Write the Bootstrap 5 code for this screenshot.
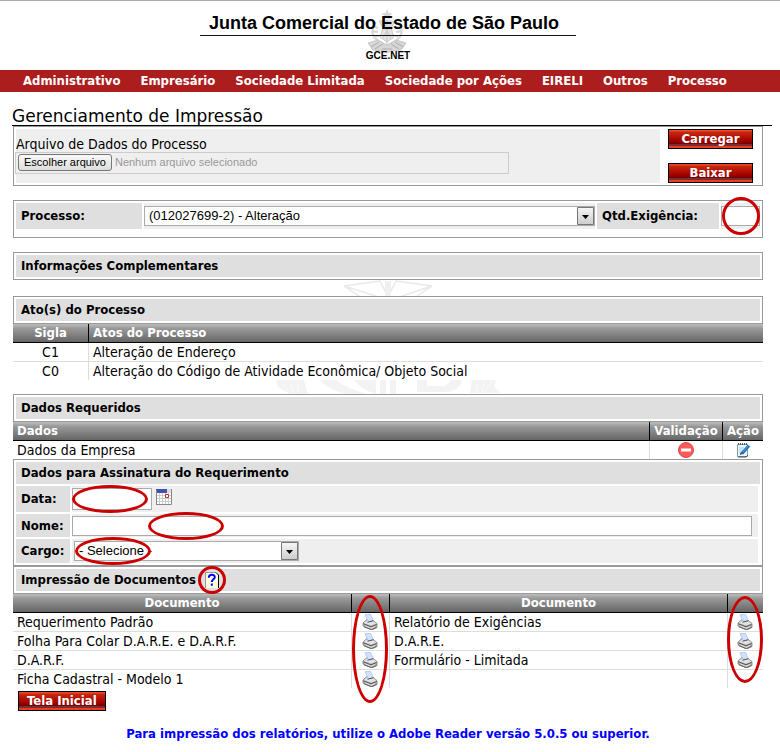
<!DOCTYPE html>
<html lang="pt-BR">
<head>
<meta charset="utf-8">
<meta name="viewport" content="width=device-width, initial-scale=1">
<title>Junta Comercial do Estado de São Paulo - GCE.NET</title>
<link href="https://cdn.jsdelivr.net/npm/bootstrap@5.3.0/dist/css/bootstrap.min.css" rel="stylesheet">
<style>
  body { font-family: "DejaVu Sans Condensed", "DejaVu Sans", Verdana, sans-serif; font-size: 14px; line-height: 18px; color: #000; background: #fff; }
  .fw-bold, th, .main-nav a, .label-cell, .btn-red, .foot-note { font-size: 13px; font-weight: 700; }
  .brand-head { height: 70px; border-top: 1px solid #aaa; padding: 0 12px 0 8px; }
  .brand-title { font: 700 18px/24px "Liberation Sans", Arial, sans-serif; border-bottom: 1px solid #111; padding: 10px 16px 0 8px; width: 376px; text-align: center; white-space: nowrap; }
  .brand-sub { font: 700 10px/14px "Liberation Sans", Arial, sans-serif; padding-top: 13px; }
  .crest { top: 8px; left: 50%; margin-left: -23px; opacity: .8; }
  .main-nav { background: #ac1d1d; padding: 0 23px; gap: 20px; height: 22px; white-space: nowrap; }
  .main-nav a { color: #fff; text-decoration: none; line-height: 22px; }
  .page { padding: 0 17px 0 13px; }
  .page-title { font-family: "DejaVu Sans", sans-serif; font-size: 17px; line-height: 18px; margin: 15px -9px 0 -1px; border-bottom: 1px solid #000; font-weight: 400; }
  .panel { border: 1px solid #999; padding: 2px; background: #fff; }
  .panel-head { background: #dfdfdf; line-height: 22px; height: 22px; padding: 0 5px; margin: 0; font-size: 13px; }
  .soft { background: #efefef; }
  .label-cell { background: #dfdfdf; padding: 0 5px; }
  .cells { display: flex; gap: 2px; }
  .gap-strip { height: 14px; overflow: hidden; display: flex; justify-content: center; }
  .gap-tall { height: 16px; }
  .btn-red { border: 1px solid #000; border-radius: 0; color: #fff; line-height: 18px; padding: 0 8px; height: 20px;
    background: linear-gradient(#f04830 0 1px, #c62a0a 2px, #a30000 60%, #700 76%, #743030 77%, #743030 87%, #ef3b24 88%); }
  .btn-red:hover { color: #fff; }
  .side-buttons { width: 100px; padding: 0 7px 0 8px; gap: 14px; }
  .file-area { padding-top: 7px; min-height: 54px; }
  .file-area > label { line-height: 16px; }
  .file-box { border: 1px solid #ccc; height: 22px; width: 494px; max-width: 100%; margin-left: -1px; padding: 1px 0 0 2px; gap: 3px; font-family: "Liberation Sans", Arial, sans-serif; font-size: 11px; line-height: 16px; }
  .file-btn { border: 1px solid #777; border-radius: 3px; background: linear-gradient(#fafafa, #ddd); padding: 0 5px; height: 17px; line-height: 15px; cursor: pointer; }
  .file-none { font-family: "Liberation Sans", Arial, sans-serif; color: #999; }
  .old-input { border: 1px solid #aaa; background: #fff; border-radius: 0; outline: 0; padding: 0 4px; font: 12px/18px "Liberation Sans", Arial, sans-serif; min-width: 0; }
  .old-select { border: 1px solid #aaa; border-radius: 0; appearance: none; padding: 0 20px 0 4px; height: 20px; font: 13px/18px "Liberation Sans", Arial, sans-serif; color: #000;
    background: #fff url("data:image/svg+xml,%3Csvg xmlns='http://www.w3.org/2000/svg' width='17' height='18'%3E%3ClinearGradient id='g' x2='0' y2='1'%3E%3Cstop stop-color='%23f6f6f6'/%3E%3Cstop offset='1' stop-color='%23ccc'/%3E%3C/linearGradient%3E%3Cpath d='M.5.5h16v17H.5z' fill='url(%23g)' stroke='%23777'/%3E%3Cpath d='M5 8h7l-3.500 4z'/%3E%3C/svg%3E") no-repeat right 0 top 0; }
  .data-input { width: 80px; height: 22px; }
  .cargo-select { width: 225px; margin-left: 2px; }
  .nome-cell { padding-right: 6px; }
  .grid-table { width: 100%; table-layout: fixed; border-collapse: separate; border-spacing: 0; margin: 0; }
  .grid-table th { background: linear-gradient(#bdbdbd 0, #999 25%, #666 100%); color: #fff; border-bottom: 1px solid #000; line-height: 18px; padding: 0 4px; }
  .grid-table td { line-height: 18px; height: 19px; padding: 0 4px; border-bottom: 1px solid #ddd; white-space: nowrap; }
  .grid-table tr:last-child td { height: 18px; border-bottom: 0; }
  .grid-table th + th { border-left: 1px solid #000; }
  .grid-table td + td { border-left: 1px solid #ddd; }
  .grid-table td.act, .grid-table th.act { padding: 0 1px 0 0; }
  .col-sigla { width: 75px; } .col-val { width: 73px; } .col-acao { width: 41px; }
  .col-print { width: 38px; } .col-print-end { width: 36px; } .col-doc { width: 338px; }
  .icon-btn { border: 0; background: none; padding: 0; display: block; width: 16px; height: 16px; margin: 0 auto; }
  .icon-btn svg { display: block; }
  .ring { position: absolute; border: 3px solid #c00; border-radius: 50%; pointer-events: none; z-index: 2; }
  .ring-wide { width: 76px; height: 28px; }
  .ring-qtd { width: 38px; height: 38px; left: 1px; top: -6px; }
  .ring-data { left: 0; top: -1px; } .ring-nome { left: 76px; top: -2px; } .ring-cargo { left: 3px; top: -2px; }
  .ring-help { width: 28px; height: 28px; left: -6px; top: -6px; }
  .ring-print { width: 36px; left: 0; top: 1px; height: 108px; }
  .ring-print.short { height: 87px; top: 2px; left: -1px; }
  .w-label { width: 126px; } .w-qlabel { width: 122px; } .w-q { width: 39px; } .w-sign { width: 54px; }
  .row-data { height: 26px; } .row-nome { height: 23px; } .row-cargo { height: 24px; }
  .sign-rows { gap: 2px; padding: 2px 2px 0 0; }
  .home-btn { margin: 3px 0 0 5px; }
  .foot-note { color: #00f; margin: 14px 0 0; }
</style>
</head>
<body>
<svg width="0" height="0" class="position-absolute" aria-hidden="true">
  <symbol id="printer" viewBox="0 0 16 16">
    <path d="M1 9l4-3.500 6 1 4 3v4L9.500 16 1 12z" fill="#b8b8b8" stroke="#777" stroke-width=".8"/>
    <path d="M1.500 9l4-3 5.500 1 3.500 2.500-5.500 2z" fill="#e2e2e2"/>
    <path d="M3 .8L8.500.3l2.800 6.200-5 1.300z" fill="#d2e3ff" stroke="#9dbdf0" stroke-width=".7"/>
    <path d="M5.500 8.200l6-1.500" stroke="#555"/>
    <path d="M1.500 9.800l7.500 3 5.500-2.300" fill="none" stroke="#555"/>
    <path d="M3.500 12l5.500 2.300 4-1.700" fill="none" stroke="#eee" stroke-width=".8"/>
    <path d="M2 12.800L9.500 15.600l5-2.300" fill="none" stroke="#666"/>
  </symbol>
</svg>

<header class="brand-head position-relative d-flex flex-column align-items-center">
  <svg class="crest position-absolute" width="40" height="46" viewBox="0 0 40 46" fill="none" stroke="#bbb" aria-hidden="true">
    <path d="M20 0l1.500 4 4 .5-3 2.500 1 4-3.500-2-3.500 2 1-4-3-2.500 4-.5z" fill="#ccc" stroke="none"/>
    <path d="M12 12l16 0-4 7 3 9-7 5-7-5 3-9z" fill="#ddd"/>
    <path d="M20 10v27M16 15l8 14M24 15l-8 14"/>
    <path d="M9 13c-5 7-6 14 4 20M31 13c5 7 6 14-4 20M6 17l5 2M5 22l6 1M6 28l6-1M34 17l-5 2M35 22l-6 1M34 28l-6-1" stroke-width="2" stroke="#ccc"/>
    <path d="M1 34l10-3 9 5 9-5 10 3-5 7-10 1-4 2-4-2-10-1z" fill="#ccc"/>
    <path d="M4 38l8-5M8 40l8-5M24 35l8 5M28 33l8 5M15 40h10" stroke="#999"/>
  </svg>
  <h1 class="brand-title position-relative m-0">Junta Comercial do Estado de São Paulo</h1>
  <div class="brand-sub position-relative">GCE.NET</div>
</header>

<nav class="main-nav d-flex align-items-center" aria-label="Menu principal">
  <a href="#">Administrativo</a><a href="#">Empresário</a><a href="#">Sociedade Limitada</a><a href="#">Sociedade por Ações</a><a href="#">EIRELI</a><a href="#">Outros</a><a href="#">Processo</a>
</nav>

<main class="page">
  <h2 class="page-title">Gerenciamento de Impressão</h2>

  <section class="panel d-flex">
    <div class="soft flex-grow-1 file-area">
      <label for="arquivo" class="d-block">Arquivo de Dados do Processo</label>
      <div class="file-box d-flex align-items-start">
        <label class="file-btn" for="arquivo">Escolher arquivo</label>
        <input type="file" id="arquivo" class="visually-hidden">
        <span class="file-none">Nenhum arquivo selecionado</span>
      </div>
    </div>
    <div class="side-buttons d-flex flex-column">
      <button type="button" class="btn btn-red w-100">Carregar</button>
      <button type="button" class="btn btn-red w-100">Baixar</button>
    </div>
  </section>

  <div class="gap-strip"></div>

  <section class="panel pb-2">
    <div class="cells row-data">
      <label class="label-cell w-label d-flex align-items-center" for="processo">Processo:</label>
      <div class="soft flex-grow-1 d-flex align-items-center">
        <select id="processo" class="old-select w-100"><option>(012027699-2) - Alteração</option></select>
      </div>
      <label class="label-cell w-qlabel d-flex align-items-center" for="qtd">Qtd.Exigência:</label>
      <div class="soft w-q position-relative d-flex align-items-center">
        <input id="qtd" class="old-input w-100" type="text"><span class="ring ring-qtd"></span>
      </div>
    </div>
  </section>

  <div class="gap-strip"></div>
  <section class="panel"><h3 class="panel-head fw-bold">Informações Complementares</h3></section>

  <div class="gap-strip gap-tall" aria-hidden="true">
    <svg width="92" height="16" viewBox="0 0 92 16" fill="none" stroke="#e9e9e9" stroke-width="1.500">
      <path d="M2 6l36-5 7 14M2 6l15 10M2 6l32 10M90 6L54 1l-7 14M90 6L75 16M90 6L60 16"/>
      <path d="M43 1h6v15h-6z" fill="#f0f0f0" stroke="none"/>
    </svg>
  </div>

  <section>
    <div class="panel"><h3 class="panel-head fw-bold">Ato(s) do Processo</h3></div>
    <table class="grid-table">
      <colgroup><col class="col-sigla"><col></colgroup>
      <thead><tr><th class="text-center">Sigla</th><th>Atos do Processo</th></tr></thead>
      <tbody>
        <tr><td class="text-center">C1</td><td>Alteração de Endereço</td></tr>
        <tr><td class="text-center">C0</td><td>Alteração do Código de Atividade Econômica/ Objeto Social</td></tr>
      </tbody>
    </table>
  </section>

  <div class="gap-strip" aria-hidden="true">
    <svg width="228" height="14" viewBox="0 0 228 14" fill="#f3f3f3" stroke="none">
      <path d="M2 0h28l4 14H16L4 7zM198 0h24l-2 6 6 7h-30z"/>
      <path d="M46 0h16c7 6 18 10 30 14H72C60 11 51 6 46 0zM80 0h22v14c-10-3-17-8-22-14zM106 0h6v14h-6zM116 0h6v14h-6zM143 0h10v6h14c5 0 8-2 9-6h12c-2 8-8 12-17 12h-28z"/>
      <path d="M8 1l5 10M16 1l3 12M24 1v12M204 1l-2 11M211 1l-4 12M218 1l-8 12" stroke="#fff" stroke-dasharray="2 1"/>
    </svg>
  </div>

  <section>
    <div class="panel"><h3 class="panel-head fw-bold">Dados Requeridos</h3></div>
    <table class="grid-table">
      <colgroup><col><col class="col-val"><col class="col-acao"></colgroup>
      <thead><tr><th>Dados</th><th class="text-center">Validação</th><th class="text-center">Ação</th></tr></thead>
      <tbody><tr>
        <td>Dados da Empresa</td>
        <td class="act"><svg class="d-block mx-auto" width="16" height="16" viewBox="0 0 16 16" role="img" aria-label="Inválido"><circle cx="8" cy="8" r="7.500" fill="#fb5a5a" stroke="#e24848"/><path d="M3 6.500h10v3H3z" fill="#fff"/></svg></td>
        <td class="act"><button type="button" class="icon-btn" aria-label="Editar"><svg width="16" height="16" viewBox="0 0 16 16"><path d="M2.500 2.500h10v12h-10z" fill="#e8f4ff" stroke="#7d9fae"/><path d="M3 2h9" stroke="#555" stroke-width="2" stroke-dasharray="1 1"/><path d="M4 6h5M4 8h4M4 10h3" stroke="#b0cce0"/><path d="M3 15h8l2-2" stroke="#444" fill="none"/><path d="M14 3.500L7 11.500" stroke="#1767b5" stroke-width="3"/><path d="M14 3L8 10" stroke="#55b5f0"/><path d="M5 13l.5-2.500 2 1.500z" fill="#333"/></svg></button></td>
      </tr></tbody>
    </table>
  </section>

  <section class="panel">
    <h3 class="panel-head fw-bold">Dados para Assinatura do Requerimento</h3>
    <div class="sign-rows d-flex flex-column">
      <div class="cells row-data">
        <label class="label-cell w-sign d-flex align-items-center" for="data">Data:</label>
        <div class="soft flex-grow-1 position-relative d-flex align-items-center gap-1">
          <input id="data" type="text" class="old-input data-input">
          <button type="button" class="icon-btn m-0 mb-1" aria-label="Calendário"><svg width="16" height="16" viewBox="0 0 16 16"><path fill="#fff" d="M0 0h16v16H0z"/><path d="M3.500 4v11M6.500 4v11M9.500 4v11M12.500 4v11M0 6.500h15M0 9.500h15M0 12.500h15" stroke="#ccc"/><path d="M0 0h11v4H0z" fill="#4450b0"/><path d="M11 0h4v4h-4z" fill="#ddd"/><path d="M.5 1v14M15.500 0v15.500H0" stroke="#888" fill="none"/><path d="M9.500 5.500h3v3h-3z" fill="#fff" stroke="#c33"/></svg></button>
          <span class="ring ring-wide ring-data"></span>
        </div>
      </div>
      <div class="cells row-nome">
        <label class="label-cell w-sign d-flex align-items-center" for="nome">Nome:</label>
        <div class="soft flex-grow-1 position-relative d-flex align-items-center nome-cell">
          <input id="nome" type="text" class="old-input flex-grow-1">
          <span class="ring ring-wide ring-nome"></span>
        </div>
      </div>
      <div class="cells row-cargo">
        <label class="label-cell w-sign d-flex align-items-center" for="cargo">Cargo:</label>
        <div class="soft flex-grow-1 position-relative d-flex align-items-center">
          <select id="cargo" class="old-select cargo-select"><option>- Selecione -</option></select>
          <span class="ring ring-wide ring-cargo"></span>
        </div>
      </div>
    </div>
  </section>

  <section>
    <div class="panel">
      <h3 class="panel-head fw-bold d-flex align-items-center gap-2">Impressão de Documentos
        <span class="position-relative"><button type="button" class="icon-btn" aria-label="Ajuda"><svg width="16" height="16" viewBox="0 0 16 16"><path d="M1 .5h11l2 2V16H1z" fill="#ffd"/><path d="M1.500 16V.5H12" stroke="#999" fill="none"/><path d="M12 .5l2.500 2.500V16" stroke="#000" fill="none"/><path d="M4.800 5.800c0-4 6.200-3.800 6-.6-.2 2.200-3 2-3 4.800M7.800 11.500v2.200" stroke="#00f" stroke-width="2" fill="none"/></svg></button><span class="ring ring-help"></span></span>
      </h3>
    </div>
    <table class="grid-table">
      <colgroup><col class="col-doc"><col class="col-print"><col><col class="col-print-end"></colgroup>
      <thead><tr><th class="text-center">Documento</th><th class="act position-relative"><span class="ring ring-print"></span></th><th class="text-center">Documento</th><th class="act position-relative"><span class="ring ring-print short"></span></th></tr></thead>
      <tbody>
        <tr><td>Requerimento Padrão</td><td class="act"><button type="button" class="icon-btn" aria-label="Imprimir"><svg width="16" height="16"><use href="#printer"/></svg></button></td><td>Relatório de Exigências</td><td class="act"><button type="button" class="icon-btn" aria-label="Imprimir"><svg width="16" height="16"><use href="#printer"/></svg></button></td></tr>
        <tr><td>Folha Para Colar D.A.R.E. e D.A.R.F.</td><td class="act"><button type="button" class="icon-btn" aria-label="Imprimir"><svg width="16" height="16"><use href="#printer"/></svg></button></td><td>D.A.R.E.</td><td class="act"><button type="button" class="icon-btn" aria-label="Imprimir"><svg width="16" height="16"><use href="#printer"/></svg></button></td></tr>
        <tr><td>D.A.R.F.</td><td class="act"><button type="button" class="icon-btn" aria-label="Imprimir"><svg width="16" height="16"><use href="#printer"/></svg></button></td><td>Formulário - Limitada</td><td class="act"><button type="button" class="icon-btn" aria-label="Imprimir"><svg width="16" height="16"><use href="#printer"/></svg></button></td></tr>
        <tr><td>Ficha Cadastral - Modelo 1</td><td class="act"><button type="button" class="icon-btn" aria-label="Imprimir"><svg width="16" height="16"><use href="#printer"/></svg></button></td><td></td><td class="act"></td></tr>
      </tbody>
    </table>
  </section>

  <button type="button" class="btn btn-red home-btn d-block">Tela Inicial</button>
  <p class="foot-note text-center">Para impressão dos relatórios, utilize o Adobe Reader versão 5.0.5 ou superior.</p>
</main>
<script src="https://cdn.jsdelivr.net/npm/bootstrap@5.3.0/dist/js/bootstrap.bundle.min.js"></script>
</body>
</html>
